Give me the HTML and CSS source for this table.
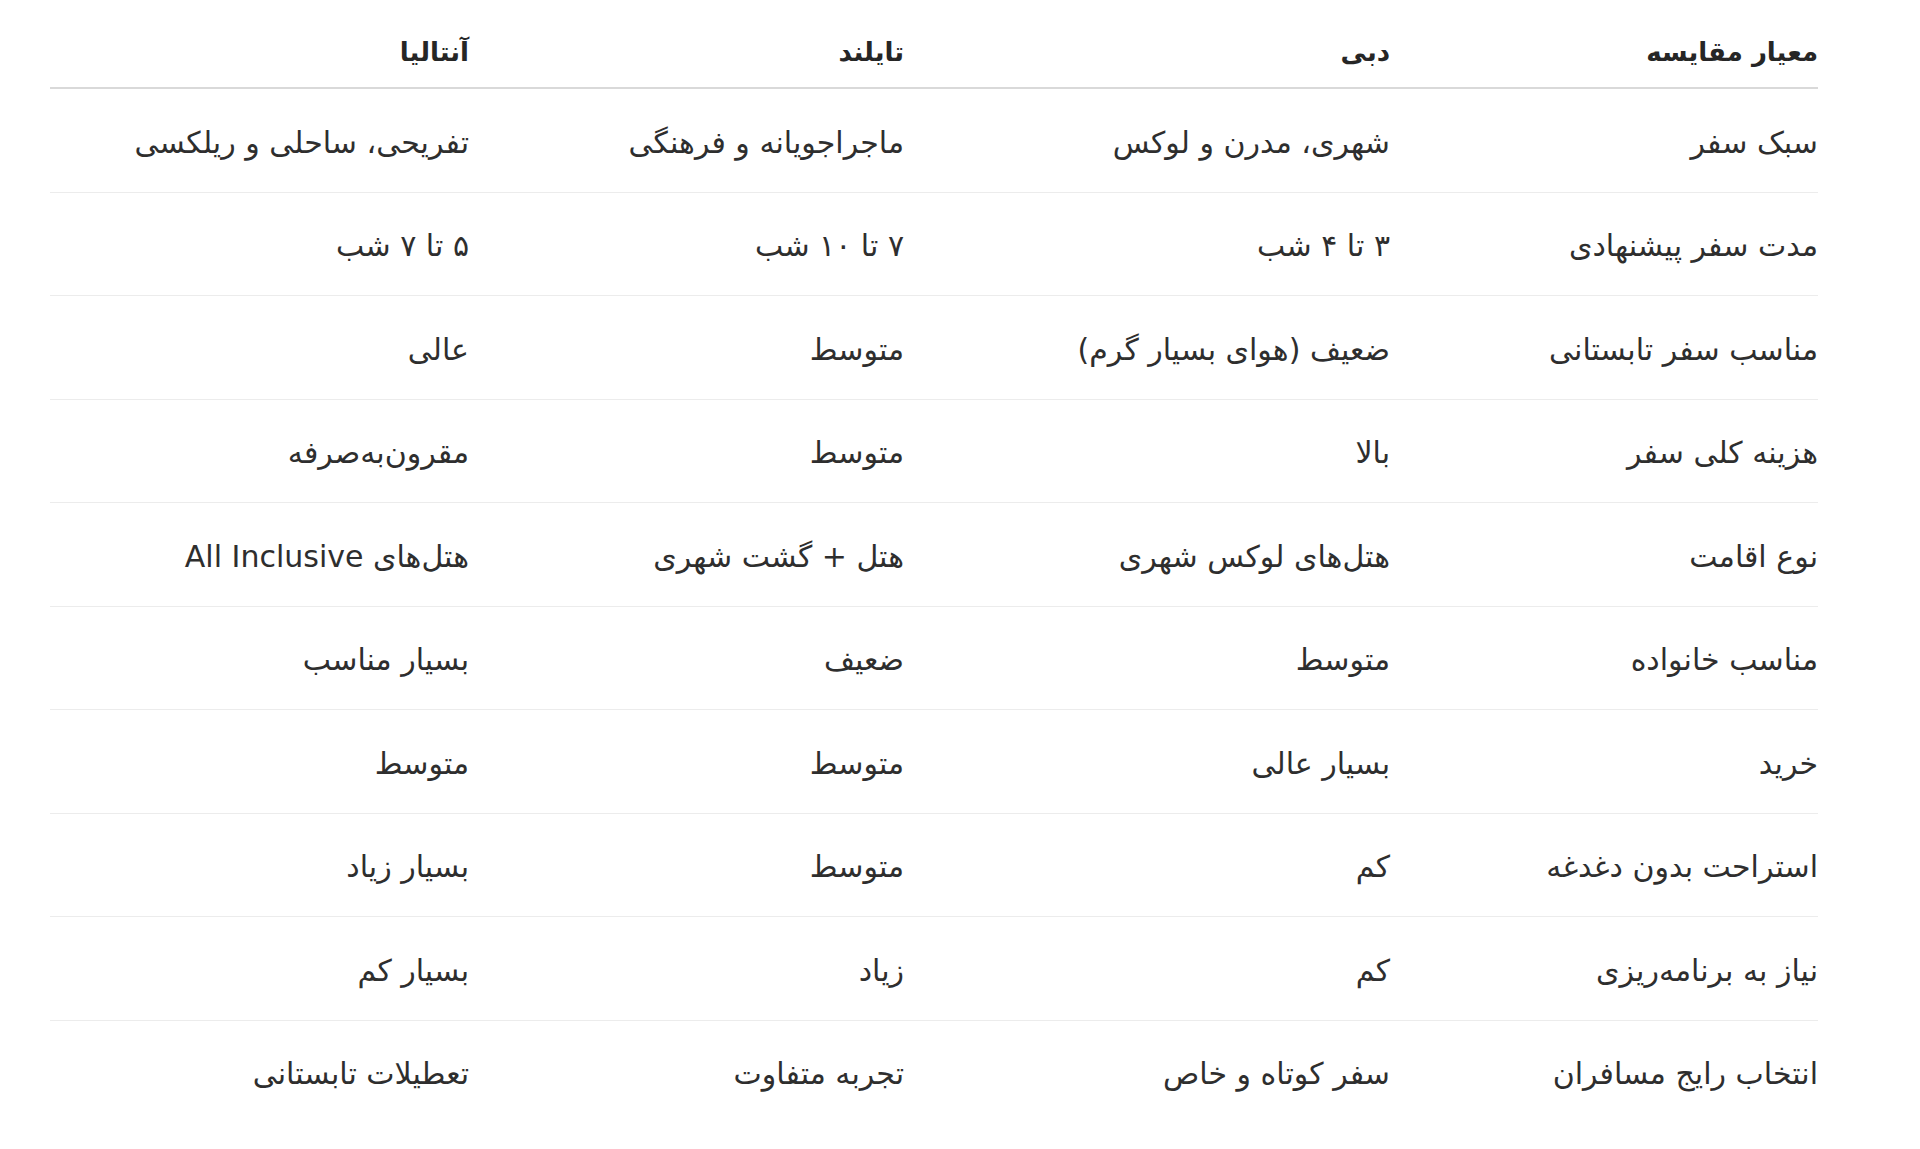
FILE: index.html
```html
<!DOCTYPE html>
<html lang="fa" dir="rtl">
<head>
<meta charset="utf-8">
<title>مقایسه مقصدها</title>
<link rel="stylesheet" href="styles.css">
</head>
<body>
<main class="page">
<table class="compare">
<colgroup>
<col class="c1"><col class="c2"><col class="c3"><col class="c4">
</colgroup>
<thead>
<tr><th>معیار مقایسه</th><th>دبی</th><th>تایلند</th><th>آنتالیا</th></tr>
</thead>
<tbody>
<tr><td>سبک سفر</td><td>شهری، مدرن و لوکس</td><td>ماجراجویانه و فرهنگی</td><td>تفریحی، ساحلی و ریلکسی</td></tr>
<tr><td>مدت سفر پیشنهادی</td><td>۳ تا ۴ شب</td><td>۷ تا ۱۰ شب</td><td>۵ تا ۷ شب</td></tr>
<tr><td>مناسب سفر تابستانی</td><td>ضعیف (هوای بسیار گرم)</td><td>متوسط</td><td>عالی</td></tr>
<tr><td>هزینه کلی سفر</td><td>بالا</td><td>متوسط</td><td>مقرون‌به‌صرفه</td></tr>
<tr><td>نوع اقامت</td><td>هتل‌های لوکس شهری</td><td>هتل + گشت شهری</td><td>هتل‌های All Inclusive</td></tr>
<tr><td>مناسب خانواده</td><td>متوسط</td><td>ضعیف</td><td>بسیار مناسب</td></tr>
<tr><td>خرید</td><td>بسیار عالی</td><td>متوسط</td><td>متوسط</td></tr>
<tr><td>استراحت بدون دغدغه</td><td>کم</td><td>متوسط</td><td>بسیار زیاد</td></tr>
<tr><td>نیاز به برنامه‌ریزی</td><td>کم</td><td>زیاد</td><td>بسیار کم</td></tr>
<tr><td>انتخاب رایج مسافران</td><td>سفر کوتاه و خاص</td><td>تجربه متفاوت</td><td>تعطیلات تابستانی</td></tr>
</tbody>
</table>
</main>
</body>
</html>
```

FILE: styles.css
```css
html, body {
  margin: 0;
  padding: 0;
  background: #ffffff;
}

body {
  font-family: "DejaVu Sans", "Noto Sans", sans-serif;
  color: #2e2e2e;
}

.page {
  padding: 18px 102px 0 50px;
}

.compare {
  width: 1768px;
  border-collapse: collapse;
  table-layout: fixed;
}

.c1 { width: 428px; }
.c2 { width: 486px; }
.c3 { width: 435px; }
.c4 { width: 419px; }

.compare th,
.compare td {
  text-align: right;
  padding: 0;
  vertical-align: middle;
  white-space: nowrap;
}

.compare th {
  font-size: 26px;
  font-weight: bold;
  height: 67px;
  padding-bottom: 2px;
  border-bottom: 2px solid #d9d9d9;
  color: #262626;
}

.compare td {
  font-size: 30px;
  font-weight: normal;
  height: 98.5px;
  padding-top: 4px;
  border-bottom: 1px solid #ececec;
}

.compare tbody tr:last-child td {
  border-bottom: none;
}
```
